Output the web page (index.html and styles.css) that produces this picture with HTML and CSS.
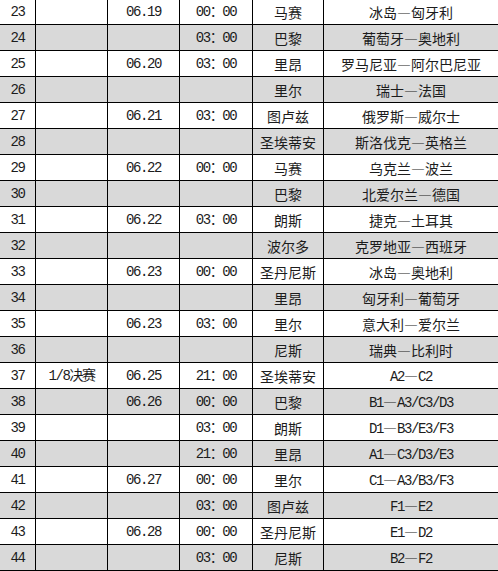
FILE: index.html
```html
<!DOCTYPE html>
<html lang="zh-CN">
<head>
<meta charset="utf-8">
<title>赛程</title>
<link rel="stylesheet" href="styles.css">
</head>
<body>
<table class="schedule">
  <colgroup>
    <col class="c-no"><col class="c-stage"><col class="c-date"><col class="c-time"><col class="c-city"><col class="c-match">
  </colgroup>
  <tbody>
    <tr class="first"><td class="m">23</td><td></td><td class="m">06.19</td><td class="m">00：00</td><td>马赛</td><td>冰岛<span class="d">—</span>匈牙利</td></tr>
    <tr class="alt"><td class="m">24</td><td></td><td></td><td class="m">03：00</td><td>巴黎</td><td>葡萄牙<span class="d">—</span>奥地利</td></tr>
    <tr><td class="m">25</td><td></td><td class="m">06.20</td><td class="m">03：00</td><td>里昂</td><td>罗马尼亚<span class="d">—</span>阿尔巴尼亚</td></tr>
    <tr class="alt"><td class="m">26</td><td></td><td></td><td></td><td>里尔</td><td>瑞士<span class="d">—</span>法国</td></tr>
    <tr><td class="m">27</td><td></td><td class="m">06.21</td><td class="m">03：00</td><td>图卢兹</td><td>俄罗斯<span class="d">—</span>威尔士</td></tr>
    <tr class="alt"><td class="m">28</td><td></td><td></td><td></td><td>圣埃蒂安</td><td>斯洛伐克<span class="d">—</span>英格兰</td></tr>
    <tr><td class="m">29</td><td></td><td class="m">06.22</td><td class="m">00：00</td><td>马赛</td><td>乌克兰<span class="d">—</span>波兰</td></tr>
    <tr class="alt"><td class="m">30</td><td></td><td></td><td></td><td>巴黎</td><td>北爱尔兰<span class="d">—</span>德国</td></tr>
    <tr><td class="m">31</td><td></td><td class="m">06.22</td><td class="m">03：00</td><td>朗斯</td><td>捷克<span class="d">—</span>土耳其</td></tr>
    <tr class="alt"><td class="m">32</td><td></td><td></td><td></td><td>波尔多</td><td>克罗地亚<span class="d">—</span>西班牙</td></tr>
    <tr><td class="m">33</td><td></td><td class="m">06.23</td><td class="m">00：00</td><td>圣丹尼斯</td><td>冰岛<span class="d">—</span>奥地利</td></tr>
    <tr class="alt"><td class="m">34</td><td></td><td></td><td></td><td>里昂</td><td>匈牙利<span class="d">—</span>葡萄牙</td></tr>
    <tr><td class="m">35</td><td></td><td class="m">06.23</td><td class="m">03：00</td><td>里尔</td><td>意大利<span class="d">—</span>爱尔兰</td></tr>
    <tr class="alt"><td class="m">36</td><td></td><td></td><td></td><td>尼斯</td><td>瑞典<span class="d">—</span>比利时</td></tr>
    <tr><td class="m">37</td><td class="m">1/8决赛</td><td class="m">06.25</td><td class="m">21：00</td><td>圣埃蒂安</td><td class="m">A2<span class="d">—</span>C2</td></tr>
    <tr class="alt"><td class="m">38</td><td></td><td class="m">06.26</td><td class="m">00：00</td><td>巴黎</td><td class="m">B1<span class="d">—</span>A3/C3/D3</td></tr>
    <tr><td class="m">39</td><td></td><td></td><td class="m">03：00</td><td>朗斯</td><td class="m">D1<span class="d">—</span>B3/E3/F3</td></tr>
    <tr class="alt"><td class="m">40</td><td></td><td></td><td class="m">21：00</td><td>里昂</td><td class="m">A1<span class="d">—</span>C3/D3/E3</td></tr>
    <tr><td class="m">41</td><td></td><td class="m">06.27</td><td class="m">00：00</td><td>里尔</td><td class="m">C1<span class="d">—</span>A3/B3/F3</td></tr>
    <tr class="alt"><td class="m">42</td><td></td><td></td><td class="m">03：00</td><td>图卢兹</td><td class="m">F1<span class="d">—</span>E2</td></tr>
    <tr><td class="m">43</td><td></td><td class="m">06.28</td><td class="m">00：00</td><td>圣丹尼斯</td><td class="m">E1<span class="d">—</span>D2</td></tr>
    <tr class="alt"><td class="m">44</td><td></td><td></td><td class="m">03：00</td><td>尼斯</td><td class="m">B2<span class="d">—</span>F2</td></tr>
  </tbody>
</table>
</body>
</html>
```
FILE: styles.css
```css
html, body {
  margin: 0;
  padding: 0;
  background: #ffffff;
  overflow: hidden;
}

.schedule {
  border-collapse: separate;
  border-spacing: 0;
  table-layout: fixed;
  width: 499px;
  font-family: "Noto Sans CJK SC", sans-serif;
  font-size: 14px;
  color: #1c1c1c;
}

.c-no { width: 36px; }
.c-stage { width: 72px; }
.c-date { width: 72px; }
.c-time { width: 73px; }
.c-city { width: 71px; }
.c-match { width: 175px; }

.schedule td {
  height: 26px;
  padding: 0;
  box-sizing: border-box;
  border-right: 1px solid #000;
  border-bottom: 1px solid #000;
  text-align: center;
  vertical-align: middle;
  line-height: 16px;
  white-space: nowrap;
  overflow: hidden;
}

.schedule tr.first td {
  height: 25px;
}

.schedule tr.alt td {
  background: #d9d9d9;
}

.m {
  font-family: "Liberation Mono", "Noto Sans CJK SC", monospace;
  letter-spacing: -1.4px;
}

.d {
  font-family: "Noto Sans CJK SC", sans-serif;
  letter-spacing: 0;
}
```
